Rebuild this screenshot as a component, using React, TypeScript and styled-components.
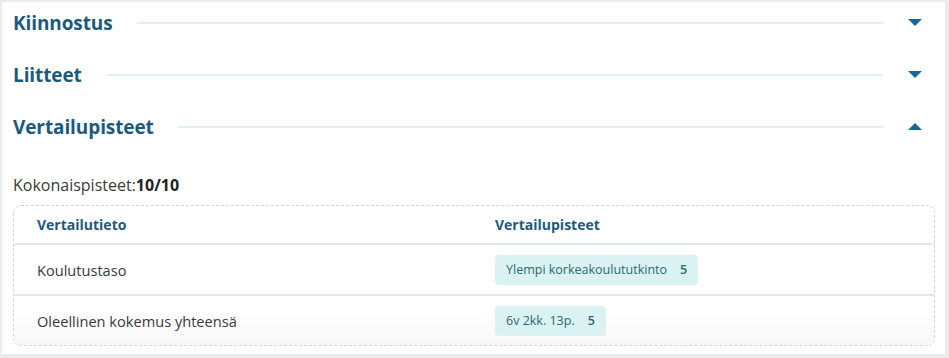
import React from "react";
import styled, { createGlobalStyle } from "styled-components";

const Global = createGlobalStyle`
  html, body { margin: 0; padding: 0; background: #ebebeb; }
  body { font-family: "Open Sans", "Liberation Sans", sans-serif; }
`;

const Frame = styled.div`
  box-sizing: border-box;
  width: 949px;
  height: 358px;
  padding: 2px 4px 4px 2px;
`;

const Card = styled.div`
  box-sizing: border-box;
  height: 100%;
  background: #fff;
  padding: 0 10px 0 11px;
  overflow: hidden;
`;

const Sections = styled.div`
  display: flex;
  flex-direction: column;
  gap: 10px;
`;

const SectionHeader = styled.div`
  display: flex;
  align-items: center;
  height: 42px;
  gap: 24px;
`;

const Title = styled.h2`
  margin: 0;
  font-size: 19px;
  font-weight: 700;
  color: #1c5a7c;
  white-space: nowrap;
  letter-spacing: -0.1px;
`;

const Rule = styled.div`
  flex: 1;
  height: 2px;
  background: #dff0f9;
`;

const Arrow = styled.div<{ $up?: boolean }>`
  width: 0;
  height: 0;
  margin: -2px 13px 0 1px;
  border-left: 7px solid transparent;
  border-right: 7px solid transparent;
  ${(p) =>
    p.$up
      ? "border-bottom: 7px solid #1b6594;"
      : "border-top: 7px solid #1b6594;"}
`;

const Total = styled.div`
  margin-top: 26px;
  font-size: 16px;
  color: #3a3a3a;
  line-height: 22px;
  b { font-weight: 700; color: #222; }
`;

const Table = styled.div`
  margin-top: 9px;
  border: 1px dashed #cfd6dc;
  border-radius: 8px;
  overflow: hidden;
`;

const Row = styled.div<{ $head?: boolean; $last?: boolean }>`
  display: grid;
  grid-template-columns: 458px 1fr;
  align-items: center;
  height: ${(p) => (p.$head ? "37px" : "49px")};
  border-bottom: ${(p) => (p.$last ? "none" : "2px solid #e3e8ec")};
  background: ${(p) =>
    p.$last ? "linear-gradient(#ffffff 30%, #f7f7f7)" : "#fff"};
  padding-left: 23px;
`;

const HeadCell = styled.div`
  font-size: 14px;
  font-weight: 700;
  color: #1c5a7c;
`;

const Cell = styled.div`
  font-size: 14.6px;
  color: #3a3a3a;
`;

const Chip = styled.span`
  display: inline-flex;
  align-items: center;
  gap: 13px;
  height: 30px;
  padding: 0 11px;
  border-radius: 4px;
  background: #daf2f2;
  color: #2a6b6e;
  font-size: 12.5px;
  strong { font-weight: 600; }
`;

const sections = [
  { title: "Kiinnostus", open: false },
  { title: "Liitteet", open: false },
  { title: "Vertailupisteet", open: true },
];

const rows = [
  { label: "Koulutustaso", value: "Ylempi korkeakoulututkinto", points: 5 },
  { label: "Oleellinen kokemus yhteensä", value: "6v 2kk. 13p.", points: 5 },
];

export default function App() {
  return (
    <Frame>
      <Global />
      <Card>
        <Sections>
          {sections.map((s) => (
            <SectionHeader key={s.title}>
              <Title>{s.title}</Title>
              <Rule />
              <Arrow $up={s.open} />
            </SectionHeader>
          ))}
        </Sections>
        <Total>
          Kokonaispisteet:<b>10/10</b>
        </Total>
        <Table>
          <Row $head>
            <HeadCell>Vertailutieto</HeadCell>
            <HeadCell>Vertailupisteet</HeadCell>
          </Row>
          {rows.map((r, i) => (
            <Row key={r.label} $last={i === rows.length - 1}>
              <Cell>{r.label}</Cell>
              <div>
                <Chip>
                  {r.value}
                  <strong>{r.points}</strong>
                </Chip>
              </div>
            </Row>
          ))}
        </Table>
      </Card>
    </Frame>
  );
}
